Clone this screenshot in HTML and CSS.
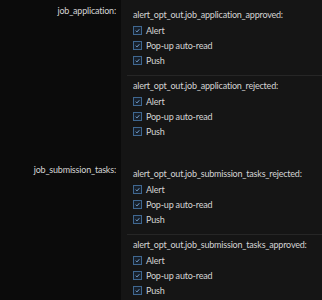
FILE: index.html
```html
<!DOCTYPE html>
<html>
<head>
<meta charset="utf-8">
<link rel="stylesheet" href="styles.css">
</head>
<body>
<div class="page">
  <div class="group">
    <div class="label">job_application:</div>
    <div class="panel">
      <div class="section">
        <div class="heading">alert_opt_out.job_application_approved:</div>
        <div class="row"><span class="cb"><svg viewBox="0 0 10 10"><path d="M2.5 5.2 L4.3 7 L7.6 3.2"/></svg></span>Alert</div>
        <div class="row"><span class="cb"><svg viewBox="0 0 10 10"><path d="M2.5 5.2 L4.3 7 L7.6 3.2"/></svg></span>Pop-up auto-read</div>
        <div class="row"><span class="cb"><svg viewBox="0 0 10 10"><path d="M2.5 5.2 L4.3 7 L7.6 3.2"/></svg></span>Push</div>
      </div>
      <div class="section">
        <div class="heading">alert_opt_out.job_application_rejected:</div>
        <div class="row"><span class="cb"><svg viewBox="0 0 10 10"><path d="M2.5 5.2 L4.3 7 L7.6 3.2"/></svg></span>Alert</div>
        <div class="row"><span class="cb"><svg viewBox="0 0 10 10"><path d="M2.5 5.2 L4.3 7 L7.6 3.2"/></svg></span>Pop-up auto-read</div>
        <div class="row"><span class="cb"><svg viewBox="0 0 10 10"><path d="M2.5 5.2 L4.3 7 L7.6 3.2"/></svg></span>Push</div>
      </div>
    </div>
  </div>
  <div class="group">
    <div class="label">job_submission_tasks:</div>
    <div class="panel">
      <div class="section">
        <div class="heading">alert_opt_out.job_submission_tasks_rejected:</div>
        <div class="row"><span class="cb"><svg viewBox="0 0 10 10"><path d="M2.5 5.2 L4.3 7 L7.6 3.2"/></svg></span>Alert</div>
        <div class="row"><span class="cb"><svg viewBox="0 0 10 10"><path d="M2.5 5.2 L4.3 7 L7.6 3.2"/></svg></span>Pop-up auto-read</div>
        <div class="row"><span class="cb"><svg viewBox="0 0 10 10"><path d="M2.5 5.2 L4.3 7 L7.6 3.2"/></svg></span>Push</div>
      </div>
      <div class="section">
        <div class="heading">alert_opt_out.job_submission_tasks_approved:</div>
        <div class="row"><span class="cb"><svg viewBox="0 0 10 10"><path d="M2.5 5.2 L4.3 7 L7.6 3.2"/></svg></span>Alert</div>
        <div class="row"><span class="cb"><svg viewBox="0 0 10 10"><path d="M2.5 5.2 L4.3 7 L7.6 3.2"/></svg></span>Pop-up auto-read</div>
        <div class="row"><span class="cb"><svg viewBox="0 0 10 10"><path d="M2.5 5.2 L4.3 7 L7.6 3.2"/></svg></span>Push</div>
      </div>
    </div>
  </div>
</div>
</body>
</html>
```
FILE: styles.css
```css
html, body {
  margin: 0;
  padding: 0;
  background: #0b0b0b;
}
body {
  font-family: Lato, "Liberation Sans", sans-serif;
  font-size: 9px;
  letter-spacing: -0.2px;
  color: #d4d4d4;
  width: 322px;
  height: 300px;
  overflow: hidden;
}
.group {
  display: grid;
  grid-template-columns: 121px 1fr;
}
.label {
  text-align: right;
  padding: 3px 5px 0 0;
  line-height: 16px;
  white-space: nowrap;
}
.panel {
  background: #151515;
  padding: 5px 0 13px;
}
.section {
  margin-left: 6px;
  padding: 2px 0 7px 6px;
}
.section + .section {
  border-top: 1px solid #262626;
}
.heading {
  line-height: 16px;
  white-space: nowrap;
}
.row {
  display: flex;
  align-items: center;
  height: 15px;
  white-space: nowrap;
}
.cb {
  width: 9px;
  height: 9px;
  box-sizing: border-box;
  border: 1px solid #3f6790;
  background: #17202b;
  margin-right: 4px;
  display: flex;
}
.cb svg {
  width: 100%;
  height: 100%;
  fill: none;
  stroke: #7eaee0;
  stroke-width: 1.3;
}
```
